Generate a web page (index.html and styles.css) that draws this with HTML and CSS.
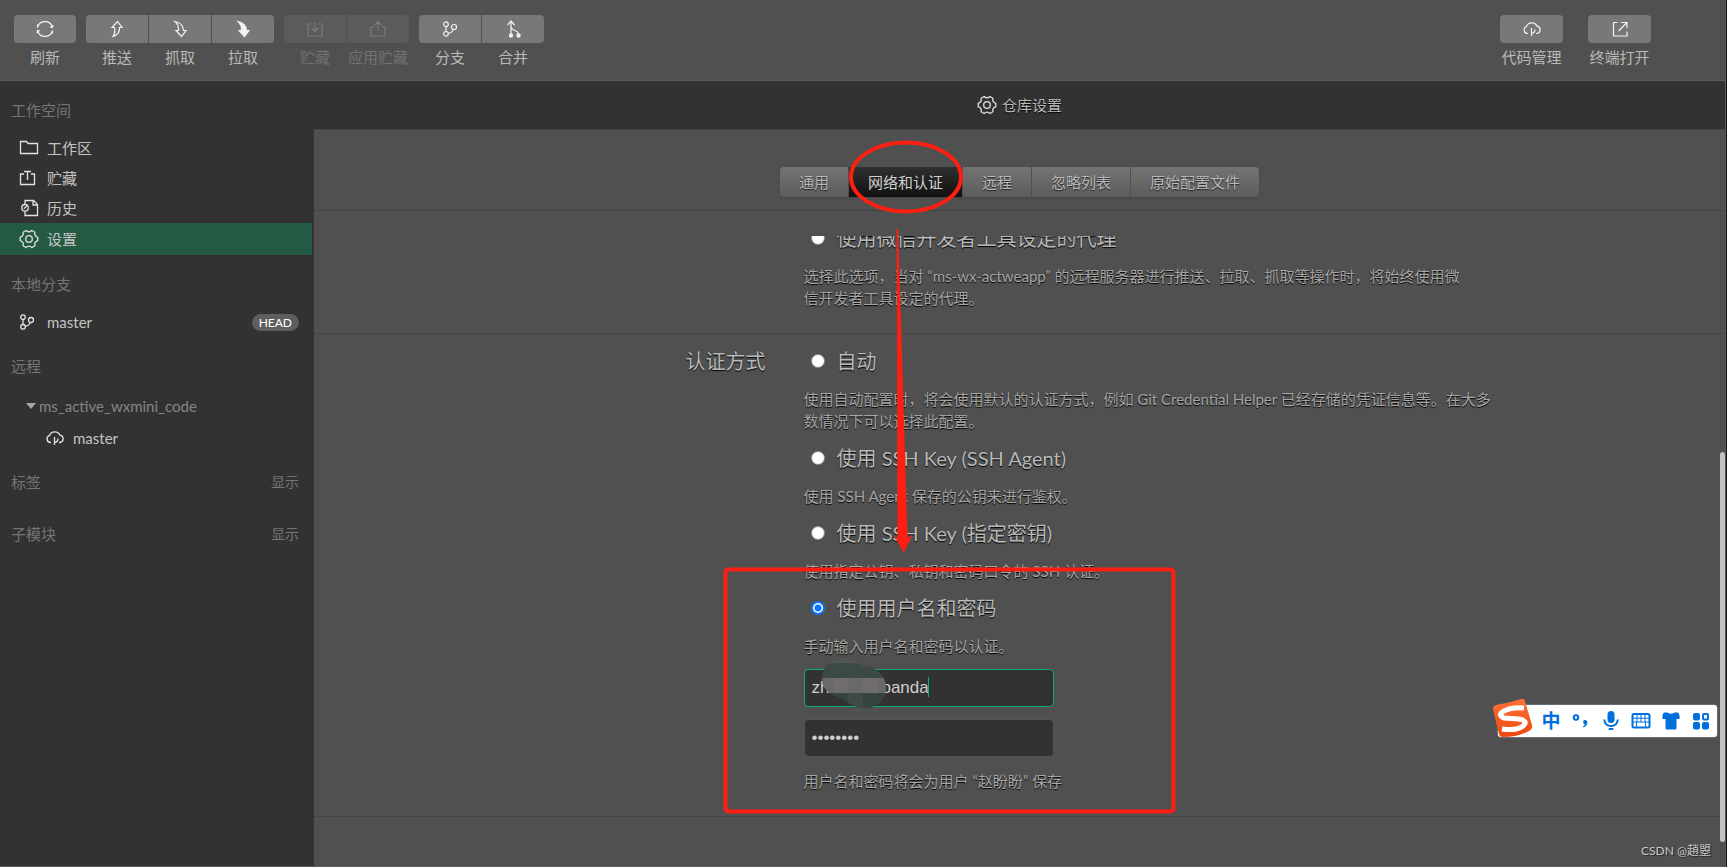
FILE: index.html
```html
<!DOCTYPE html>
<html lang="zh-CN">
<head>
<meta charset="utf-8">
<title>仓库设置</title>
<link rel="stylesheet" href="styles.css">
</head>
<body>
<svg class="defs" aria-hidden="true">
  <symbol id="gear" viewBox="0 0 20 20"><path stroke-linejoin="round" d="M18.800 8.300V11.700Q15 12.900 15.900 16.800L12.900 18.500Q10 15.800 7.100 18.500L4.100 16.800Q5 12.900 1.200 11.700V8.300Q5 7.100 4.100 3.200L7.100 1.500Q10 4.200 12.900 1.500L15.900 3.200Q15 7.100 18.800 8.300Z"/><circle cx="10" cy="10" r="3.300"/></symbol>
  <symbol id="branch" viewBox="0 0 16 16"><circle cx="4" cy="3.2" r="2.3"/><circle cx="4" cy="12.8" r="2.3"/><circle cx="12" cy="6" r="2.5"/><path d="M4 5.5v5M11.4 8.4Q10.500 11.500 6.300 12.300"/></symbol>
  <symbol id="cloud" viewBox="0 0 20 16"><path d="M6 12.500H5A3.700 3.700 0 0 1 4.500 5.400A5.600 5.200 0 0 1 15 5.200A3.700 3.700 0 0 1 15 12.500H14"/><path d="M9.500 7v8M9.500 12.500q3.500-.5 3.500-4"/></symbol>
</svg>
<div class="app">
  <header class="toolbar">
    <div class="tools">
      <div class="group"><button class="tool"><span class="key"><svg viewBox="0 0 20 20"><path d="M2.500 8.500A7.700 7.700 0 0 1 17.200 7.500M17.500 11.500A7.700 7.700 0 0 1 2.800 12.500M2.500 8.500V5.500M17.500 11.500V14.500M14.800 8L17.400 8.500L18 6M5.200 12L2.600 11.500L2 14"/></svg></span>刷新</button></div>
      <div class="group">
        <button class="tool"><span class="key"><svg viewBox="0 0 20 20"><path d="M6 17.500Q8.500 14 7.500 8.500H5L10.500 2.500L15 8.500H12.500Q13 15 6 17.500Z"/></svg></span>推送</button>
        <button class="tool"><span class="key"><svg viewBox="0 0 20 20"><path d="M5 2.500Q9 6 8.500 11.500H6L11.500 17.500L16 11.500H13.500Q13 4 5 2.500Z"/></svg></span>抓取</button>
        <button class="tool"><span class="key"><svg class="solid" viewBox="0 0 20 20"><path d="M5 2.500Q9 6 8.500 11.500H6L11.500 17.500L16 11.500H13.500Q13 4 5 2.500Z"/></svg></span>拉取</button>
      </div>
      <div class="group">
        <button class="tool" disabled><span class="key"><svg viewBox="0 0 20 20"><path d="M6.500 5H3V17H17V5H13.500M10 3.500V12M6.500 9L10 12.500L13.500 9"/></svg></span>贮藏</button>
        <button class="tool" disabled><span class="key"><svg viewBox="0 0 20 20"><path d="M6.500 8H3V17H17V8H13.500M10 12V3M6.500 6L10 2.500L13.500 6"/></svg></span>应用贮藏</button>
      </div>
      <div class="group">
        <button class="tool"><span class="key"><svg class="small"><use href="#branch"/></svg></span>分支</button>
        <button class="tool"><span class="key"><svg viewBox="0 0 20 20"><path d="M8 15V2.500M4.500 6L8 2L11.500 6M8 8Q8.500 10.500 12 11.500Q15 12.500 15.500 15"/><circle class="dot" cx="8" cy="16.500" r="1.600"/><circle class="dot" cx="15.500" cy="16.500" r="1.600"/></svg></span>合并</button>
      </div>
    </div>
    <div class="tools tools-right">
      <button class="tool wide"><span class="key"><svg class="cloud"><use href="#cloud"/></svg></span>代码管理</button>
      <button class="tool wide"><span class="key"><svg viewBox="0 0 20 20"><path d="M7.500 3.500H3.500V17H17V12.500M11 3.500H17V9M17 3.500L8.500 12"/></svg></span>终端打开</button>
    </div>
  </header>
  <div class="body">
    <nav class="sidebar">
      <section>
        <h2>工作空间</h2>
        <a class="item" href="#work"><svg class="icon" viewBox="0 0 20 20"><path d="M1.500 15.500V3.500H7.500L9 5.500H18.500V15.500Z"/></svg>工作区</a>
        <a class="item" href="#stash"><svg class="icon" viewBox="0 0 20 20"><path d="M5 6H1.500V16.500H15.500V6H12M8.500 12V3M5 3.500H12"/></svg>贮藏</a>
        <a class="item" href="#history"><svg class="icon" viewBox="0 0 20 20"><path d="M6 6V2.500H14.500L18.500 6.500V17.500H6V13.500M14 2.500V7H18.500"/><circle cx="6" cy="9.800" r="3.300"/><path d="M7.500 8L5.800 10.200H4.500"/></svg>历史</a>
        <a class="item active" href="#settings"><svg class="icon"><use href="#gear"/></svg>设置</a>
      </section>
      <section>
        <h2>本地分支</h2>
        <a class="item" href="#master"><svg class="icon branch"><use href="#branch"/></svg>master<span class="badge">HEAD</span></a>
      </section>
      <section class="remote">
        <h2>远程</h2>
        <details open>
          <summary>ms_active_wxmini_code</summary>
          <a class="item nested" href="#remote-master"><svg class="icon cloud"><use href="#cloud"/></svg>master</a>
        </details>
      </section>
      <section class="row"><h2>标签</h2><button class="show">显示</button></section>
      <section class="row"><h2>子模块</h2><button class="show">显示</button></section>
    </nav>
    <main class="main">
      <h1 class="title"><svg class="icon"><use href="#gear"/></svg>仓库设置</h1>
      <div class="tabbar">
        <div class="tabs">
          <button>通用</button><button class="current">网络和认证</button><button>远程</button><button>忽略列表</button><button>原始配置文件</button>
        </div>
      </div>
      <div class="scroll">
        <form class="settings">
          <section class="setting scrolled">
            <div class="fields">
              <label class="option"><input type="radio" name="proxy">使用微信开发者工具设定的代理</label>
              <p>选择此选项，当对 “ms-wx-actweapp” 的远程服务器进行推送、拉取、抓取等操作时，将始终使用微<br>信开发者工具设定的代理。</p>
            </div>
          </section>
          <section class="setting">
            <h3>认证方式</h3>
            <div class="fields">
              <label class="option"><input type="radio" name="auth">自动</label>
              <p>使用自动配置时，将会使用默认的认证方式，例如 Git Credential Helper 已经存储的凭证信息等。在大多<br>数情况下可以选择此配置。</p>
              <label class="option"><input type="radio" name="auth">使用 SSH Key (SSH Agent)</label>
              <p>使用 SSH Agent 保存的公钥来进行鉴权。</p>
              <label class="option"><input type="radio" name="auth">使用 SSH Key (指定密钥)</label>
              <p>使用指定公钥、私钥和密码口令的 SSH 认证。</p>
              <label class="option"><input type="radio" name="auth" checked>使用用户名和密码</label>
              <p>手动输入用户名和密码以认证。</p>
              <div class="entry">
                <input class="text focused" type="text" aria-label="用户名" value="zh           panda">
                <span class="caret"></span>
                <svg class="smudge" viewBox="0 0 66 52">
                  <clipPath id="blob"><path d="M1 20C1 9 10 1 21 1C30 0 36 4 42 8C54 8 65 16 65 30C65 42 56 50 44 50C34 50 26 44 20 40C9 37 1 32 1 20Z"/></clipPath>
                  <g clip-path="url(#blob)">
                    <path fill="#535653" d="M0 0h66v6H0z"/><path fill="#3b4a42" d="M0 5h66v16H0z"/><path fill="#69696a" d="M0 20h66v16H0z"/><path fill="#706d6c" d="M12 20h15v16H12zM42 20h15v16H42z"/><path fill="#35443c" d="M0 35h66v17H0z"/><path fill="#404b46" d="M27 35h15v17H27z"/>
                  </g>
                </svg>
              </div>
              <div class="entry"><input class="text" type="password" aria-label="密码" value="password"></div>
              <p class="note">用户名和密码将会为用户 “赵盼盼” 保存</p>
            </div>
          </section>
        </form>
      </div>
    </main>
  </div>
  <span class="thumb"></span>
  <svg class="marks" viewBox="0 0 1727 867" aria-hidden="true">
    <ellipse cx="906" cy="177" rx="55" ry="34.500"/>
    <rect x="725.500" y="569.500" width="448" height="242" rx="3"/>
    <path d="M896.500 229H898L901 320L907.500 538L912.500 535L903.500 553L894 535L897.500 538L897 320Z"/>
  </svg>
  <div class="ime">
    <svg class="sogou" viewBox="0 0 42 42"><defs><linearGradient id="orange" x2="0" y2="1"><stop offset="0" stop-color="#ff7138"/><stop offset="1" stop-color="#ee480e"/></linearGradient></defs><path fill="url(#orange)" d="M4 7Q17 5 29 1Q32 0 33 3L40 27Q41 31 37 33Q25 39 11 39Q8 39 7 36L1 11Q1 8 4 7Z"/><path class="swirl" d="M32 10Q20 9 12 13Q5 17 12 20L27 21Q37 23 31 28Q25 33 10 31"/></svg>
    <span class="zh">中</span>
    <svg viewBox="0 0 20 20"><circle class="line" cx="5" cy="6.500" r="2.200"/><path d="M13.500 9a2.300 2.300 0 0 1 2.800 2.300Q16.300 15 12.500 16.500L12 15.500Q13.800 14.500 13.700 13.300A2.300 2.300 0 0 1 13.500 9Z"/></svg>
    <svg viewBox="0 0 20 20"><rect x="6.500" y="0" width="7" height="12" rx="3.500"/><path class="line" d="M3.200 8.500Q4 15 10 15T16.800 8.500"/><rect x="7.500" y="17" width="5" height="2" rx="1"/></svg>
    <svg viewBox="0 0 20 20"><rect class="line" x="1.500" y="3" width="17" height="13.500" rx="1.500"/><path class="thin" d="M2 7.200H18M2 11H18M6 3V11M10 3V11M14 3V11M5.500 11V16M14.500 11V16"/></svg>
    <svg viewBox="0 0 20 20"><path d="M3 1.500H6.500Q10 4 13.500 1.500H17Q19 3 18.500 8H15.500V17Q15.500 18.500 14 18.500H6Q4.500 18.500 4.500 17V8H1.500Q1 3 3 1.500Z"/></svg>
    <svg viewBox="0 0 20 20"><rect x="2" y="2" width="7" height="7.500" rx="2"/><rect x="2" y="11" width="7" height="7.500" rx="2"/><rect x="11" y="11" width="7" height="7.500" rx="2"/><rect class="line" x="12" y="3" width="5" height="5.500" rx="1"/></svg>
  </div>
  <span class="watermark">CSDN @趙曌</span>
</div>
</body>
</html>
```
FILE: styles.css
```css
* { box-sizing: border-box; }
body {
  margin: 0;
  background: #111;
  color: #b9b9b9;
  font: 15px/22px Lato, "Noto Sans CJK SC", sans-serif;
}
button {
  border: 0;
  padding: 0;
  background: none;
  color: inherit;
  font: inherit;
}
h1, h2, h3, p { margin: 0; font-weight: 400; }
a { color: inherit; text-decoration: none; }
svg { fill: none; stroke: currentColor; }
.defs { position: absolute; width: 0; height: 0; }

.app {
  position: relative;
  display: flex;
  flex-direction: column;
  height: 100vh;
  margin-right: 1px;
  border-right: 1px solid #5a5a5a;
  border-bottom: 1px solid #5e5a5a;
  overflow: hidden;
  background: #505050;
}

.toolbar {
  display: flex;
  justify-content: space-between;
  padding: 15px 74px 12px 14px;
  border-bottom: 1px solid #5c5c5c;
}
.tools { display: flex; gap: 10px; }
.tools-right { gap: 25px; }
.group { display: flex; gap: 1px; }
.tool {
  display: flex;
  flex-direction: column;
  align-items: center;
  gap: 3px;
  width: 62px;
  white-space: nowrap;
}
.tool.wide { width: 63px; }
.key {
  display: flex;
  align-items: center;
  justify-content: center;
  width: 100%;
  height: 28px;
  background: #787878;
  color: #f2f2f2;
}
.key svg { width: 20px; height: 20px; stroke-width: 1.2; }
.key svg.small { width: 16px; height: 16px; }
.key svg.cloud { width: 20px; height: 16px; }
.key .solid, .key .dot { fill: currentColor; }
.tool:first-child .key { border-top-left-radius: 4px; border-bottom-left-radius: 4px; }
.tool:last-child .key { border-top-right-radius: 4px; border-bottom-right-radius: 4px; }
.wide .key { border-radius: 4px; }
.tool:disabled { color: #717171; }
.tool:disabled .key { background: #5b5b5b; color: #7b7b7b; }

.body { display: flex; flex: 1; min-height: 0; }
.sidebar {
  flex: 0 0 314px;
  display: flex;
  flex-direction: column;
  gap: 14px;
  padding: 14px 2px 0 0;
  background: #323232;
}
.sidebar h2 {
  padding-left: 11px;
  color: #757575;
  font-size: 15px;
  line-height: 30px;
}
.sidebar section > h2 + .item { margin-top: 8px; }
.item {
  display: flex;
  align-items: center;
  gap: 8px;
  height: 30px;
  padding: 0 13px 0 19px;
  color: #c4c4c4;
}
.icon { width: 20px; height: 20px; color: #e2e2e2; stroke-width: 1.3; }
.icon.branch { width: 16px; height: 16px; margin-right: 4px; }
.active { height: 32px; background: #245a43; }
.badge {
  margin-left: auto;
  padding: 0 7px;
  border-radius: 9px;
  background: #5e5e5e;
  color: #fff;
  font-size: 12px;
  line-height: 17px;
}
.remote summary {
  display: flex;
  align-items: center;
  gap: 3px;
  height: 30px;
  margin: 10px 0 2px;
  padding-left: 26px;
  color: #858585;
}
.remote summary::before {
  content: "";
  border: 5px solid transparent;
  border-top: 6px solid #a5a5a5;
  border-bottom: 0;
}
.nested { padding-left: 45px; }
.icon.cloud { height: 16px; }
.row {
  display: flex;
  justify-content: space-between;
  align-items: center;
  padding-right: 13px;
}
.row + .row { margin-top: 8px; }
.show { color: #757575; font-size: 14px; }

.main { flex: 1; display: flex; flex-direction: column; min-width: 0; }
.title {
  display: flex;
  justify-content: center;
  align-items: center;
  gap: 5px;
  height: 49px;
  border-bottom: 1px solid #464646;
  background: #323232;
  font-size: 15px;
  text-shadow: 0 1px 1px #000;
}
.tabbar {
  display: flex;
  justify-content: center;
  padding: 37px 0 13px;
  border-bottom: 1px solid #434343;
}
.tabs {
  display: flex;
  gap: 1px;
  border-radius: 4px;
  box-shadow: 0 1px 2px #444;
}
.tabs button {
  height: 30px;
  padding: 0 19px;
  background: linear-gradient(#747474, #5c5c5c);
  text-shadow: 0 1px 1px #222;
}
.tabs button:first-child { border-radius: 4px 0 0 4px; }
.tabs button:last-child { border-radius: 0 4px 4px 0; }
.tabs .current { background: linear-gradient(#303030, #101010); color: #d0d0d0; }

.scroll { flex: 1; min-height: 0; margin-top: 25px; overflow: hidden; }
.setting {
  display: grid;
  grid-template-columns: 32% 1fr;
  column-gap: 38px;
  padding: 12px 0 13px;
  border-bottom: 1px solid #434343;
  text-shadow: 0 1px 1px #000;
}
.scrolled { margin-top: -25px; }
.setting h3 { text-align: right; font-size: 20px; line-height: 30px; }
.fields { grid-column: 2; }
.option {
  display: flex;
  align-items: center;
  gap: 12px;
  width: max-content;
  height: 30px;
  margin: 0 0 12px 7px;
  font-size: 20px;
  line-height: 30px;
}
.option input {
  appearance: none;
  width: 14px;
  height: 14px;
  margin: 0;
  border: 1px solid #8a8a8a;
  border-radius: 50%;
  background: #fff;
}
.option input:checked {
  border: 2px solid #0a75ff;
  background: radial-gradient(circle, #0a75ff 3px, #fff 4px);
}
.fields p { margin-bottom: 11px; color: #a6a6a6; white-space: nowrap; }
.fields .note { margin: 13px 0 11px; }
.entry { position: relative; width: 250px; margin-top: 12px; }
.text {
  display: block;
  width: 100%;
  height: 38px;
  padding: 0 7px;
  border: 1px solid #565656;
  border-radius: 4px;
  outline: 0;
  background: #323232;
  color: #cfcfcf;
  font: 17px "Liberation Sans", sans-serif;
}
.text.focused { border-color: #0fae6c; }
.caret {
  position: absolute;
  left: 124px;
  top: 8px;
  width: 1px;
  height: 20px;
  background: #0fae6c;
}
.smudge { position: absolute; left: 17px; top: -11px; width: 66px; height: 52px; stroke: none; }

.thumb {
  position: absolute;
  top: 452px;
  right: 0;
  width: 5px;
  height: 390px;
  border-radius: 3px;
  background: #c1c1c1;
}
.marks {
  position: absolute;
  left: 0;
  top: 0;
  width: 1727px;
  height: 867px;
  pointer-events: none;
  stroke: #ff1f12;
  stroke-width: 4;
}
.marks path { fill: #ff1f12; stroke: none; }
.ime {
  position: absolute;
  right: 8px;
  top: 705px;
  display: flex;
  align-items: center;
  gap: 10px;
  height: 32px;
  padding-right: 6px;
  border-radius: 3px;
  background: #fff;
  box-shadow: 0 0 2px #9cc0e0;
  color: #0070dc;
}
.ime svg { width: 20px; height: 20px; fill: currentColor; stroke: none; }
.ime .line { fill: none; stroke: currentColor; stroke-width: 2; }
.ime .thin { fill: none; stroke: currentColor; stroke-width: 1; }
.ime .sogou { width: 42px; height: 42px; margin: -4px -3px 0 -6px; }
.ime .swirl { fill: none; stroke: #fff; stroke-width: 5; }
.zh { width: 20px; font-size: 19px; font-weight: 700; text-align: center; }
.watermark {
  position: absolute;
  right: 14px;
  bottom: 6px;
  color: #cacaca;
  font-size: 12px;
  line-height: 18px;
  text-shadow: 1px 1px 1px #222;
}
```
